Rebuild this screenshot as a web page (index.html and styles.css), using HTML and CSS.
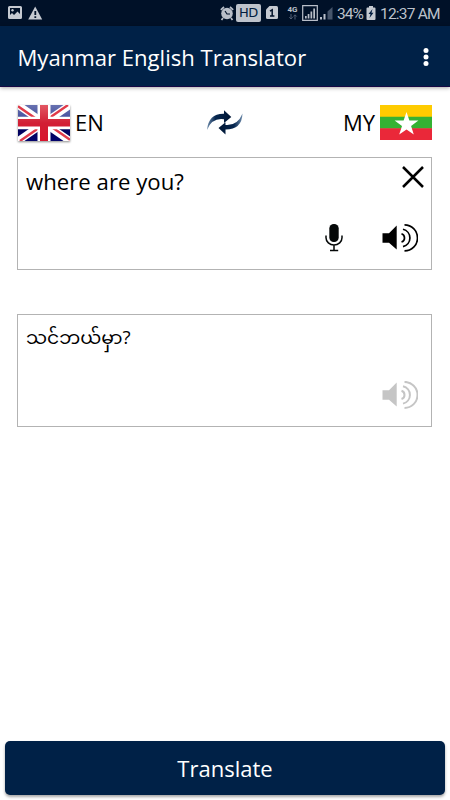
FILE: index.html
```html
<!DOCTYPE html>
<html lang="en">
<head>
<meta charset="utf-8">
<title>Myanmar English Translator</title>
<link rel="stylesheet" href="styles.css">
</head>
<body>
<div class="status">
  <div class="status-left">
    <svg width="14" height="14" viewBox="0 0 14 14"><path fill="#c5cad1" fill-rule="evenodd" d="M1.500 0h11Q14 0 14 1.500v10Q14 13 12.500 13h-11Q0 13 0 11.500v-10Q0 0 1.500 0zM2 2v7l2-2 2 2 3.500-3.500L12 8V2z"/><circle cx="4.500" cy="4.200" r="1.200" fill="#c5cad1"/></svg>
    <svg width="15" height="14" viewBox="0 0 15 14"><path fill="#c5cad1" d="M7.200 0.500 14.200 13.500H.2z"/><path fill="#001128" d="M6.400 5h1.800v4H6.400zM6.400 10.300h1.800V12H6.400z"/></svg>
  </div>
  <div class="status-right">
    <svg width="14" height="15" viewBox="0 0 14 15"><circle cx="7" cy="7.500" r="5.800" fill="#b9bfc9"/><path d="M.8 3.800 4 1M13.200 3.800 10 1M3 12l-1.500 2M11 12l1.500 2" stroke="#b9bfc9" stroke-width="1.700"/><path d="M5 5 7 8h3" fill="none" stroke="#001128" stroke-width="1.200"/></svg>
    <span class="hd">HD</span>
    <svg class="sim" width="12" height="14" viewBox="0 0 12 14"><path fill="#c5cad1" d="M3.500 0h7Q12 0 12 1.500v10Q12 13 10.500 13h-9Q0 13 0 11.500V3.500z"/><path d="M4 5.200 6.200 3.800V10M4 10h4.400" fill="none" stroke="#001128" stroke-width="1.500"/></svg>
    <span class="net"><span>4G</span><svg width="10" height="6" viewBox="0 0 10 6"><path d="M3 0v5M1.300 3.300 3 5l1.700-1.700M7 5.500V1M5.300 2.500 7 .8l1.700 1.700" fill="none" stroke="#526075"/></svg></span>
    <svg width="16" height="16" viewBox="0 0 16 16"><path d="M.7.7h14.600v14.600H.7z" fill="none" stroke="#b9bfc9" stroke-width="1.200"/><path d="M3 11h1.700v2.500H3zM5.700 9h1.700v4.500H5.700zM8.500 6.500h1.700v7H8.500zM11.300 3.500H13v10h-1.700z" fill="#b9bfc9"/></svg>
    <svg class="sig" width="13" height="13" viewBox="0 0 13 13"><path d="M0 10h2v2.500H0zM3.500 7h2v5.500h-2z" fill="#b9bfc9"/><path d="M7.500 4.500 12.500 0v12.500h-5z" fill="#46556b"/></svg>
    <span class="pct">34%</span>
    <svg class="bat" width="10" height="14" viewBox="0 0 10 14"><path fill="#c5cad1" d="M3 0h4v1.500h1.500Q9.500 1.500 9.500 2.500V13q0 1-1 1h-7q-1 0-1-1V2.500q0-1 1-1H3z"/><path d="M6.500 3 2.500 8h2L3.500 12l4-5.200h-2z" fill="#001c3f"/></svg>
    <span class="time">12:37 AM</span>
  </div>
</div>
<header class="bar">
  <h1>Myanmar English Translator</h1>
  <svg width="6" height="20" viewBox="0 0 6 20"><g fill="#fff"><circle cx="3" cy="3.500" r="2.500"/><circle cx="3" cy="10" r="2.500"/><circle cx="3" cy="16.500" r="2.500"/></g></svg>
</header>
<main>
  <div class="langs">
    <div class="lang">
      <svg class="flag uk" width="52" height="36" viewBox="0 0 52 37" preserveAspectRatio="none">
        <defs><linearGradient id="b" x2="0" y2="1"><stop offset="0" stop-color="#6871b0"/><stop offset=".49" stop-color="#3c4699"/><stop offset=".51" stop-color="#000052"/><stop offset="1" stop-color="#04046c"/></linearGradient><linearGradient id="r" x2="0" y2="1"><stop offset="0" stop-color="#e25763"/><stop offset=".5" stop-color="#d21f35"/><stop offset="1" stop-color="#d8142c"/></linearGradient></defs>
        <path fill="url(#b)" d="M0 0h52v37H0z"/>
        <path d="M0 0 52 37M52 0 0 37" stroke="#fff" stroke-width="7.500"/>
        <path d="M0 1.300 22 17M50 0 28 15.700M52 35.700 30 20M2 37 24 21.300" stroke="#e03a49" stroke-width="2.400"/>
        <path d="M19.500 0h13v37h-13zM0 12h52v13H0z" fill="#fff"/>
        <path d="M22 0h8v37h-8zM0 14.500h52v7.500H0z" fill="url(#r)"/>
      </svg>
      <span>EN</span>
    </div>
    <svg class="swap" width="38" height="28" viewBox="0 0 38 28">
      <defs><linearGradient id="s1"><stop offset="0" stop-color="#6f8dad"/><stop offset=".35" stop-color="#06264f"/><stop offset="1" stop-color="#001634"/></linearGradient><linearGradient id="s2"><stop offset="0" stop-color="#001634"/><stop offset=".65" stop-color="#06264f"/><stop offset="1" stop-color="#6f8dad"/></linearGradient></defs>
      <path fill="url(#s1)" d="M1 21Q2.500 4.500 18 4.800V1.200L25.300 8 18 14V10.300Q6 8.500 1 21z"/>
      <path fill="url(#s2)" d="M36.500 4.500Q36 20.500 19.500 20.500V25.500L12.500 19 19.500 13.300V16Q31.500 17 36.500 4.500z"/>
    </svg>
    <div class="lang">
      <span>MY</span>
      <svg class="flag" width="52" height="35" viewBox="0 0 52 35"><path fill="#fecb00" d="M0 0h52v12H0z"/><path fill="#34b233" d="M0 11.700h52v12H0z"/><path fill="#ea2839" d="M0 23.300h52V35H0z"/><path fill="#fff" d="M26.500 7l2.900 8.600h9l-7.300 5.400 2.700 8.600-7.300-5.200-7.300 5.200L22 21l-7.400-5.400h9z"/></svg>
    </div>
  </div>
  <section class="box source">
    <div class="line"><span>where are you?</span>
      <svg width="24" height="22" viewBox="0 0 24 22"><path d="M2 1 22 21M22 1 2 21" stroke="#000" stroke-width="2.500"/></svg></div>
    <div class="tools">
      <svg class="mic" width="18" height="28" viewBox="0 0 18 28"><rect x="4.300" y="0" width="9.400" height="18" rx="4.500" fill="#050808"/><path d="M1 11.500v2.200a8 7.300 0 0 0 16 0v-2.200M9 21v5.500M5 26.500h8.200" fill="none" stroke="#050808" stroke-width="1.500"/></svg>
      <svg class="sound" width="36" height="28" viewBox="0 0 36 28"><path d="M.5 9.300H7L14.700 1.500V25.500L7 18.700H.5z" fill="currentColor"/><path d="M19.500 9.800a4.300 4.300 0 0 1 0 8.200M21 5.200a9.300 9 0 0 1 0 17.400M22.500.9a13 13 0 0 1 0 26" fill="none" stroke="currentColor" stroke-width="1.700"/></svg>
    </div>
  </section>
  <section class="box target">
    <div class="line my"><span>သင်ဘယ်မှာ?</span></div>
    <div class="tools">
      <svg class="sound off" width="36" height="28" viewBox="0 0 36 28"><path d="M.5 9.300H7L14.700 1.500V25.500L7 18.700H.5z" fill="currentColor"/><path d="M19.500 9.800a4.300 4.300 0 0 1 0 8.200M21 5.200a9.300 9 0 0 1 0 17.400M22.500.9a13 13 0 0 1 0 26" fill="none" stroke="currentColor" stroke-width="2"/></svg>
    </div>
  </section>
</main>
<button class="go">Translate</button>
</body>
</html>
```
FILE: styles.css
```css
* { box-sizing: border-box; }
body {
  margin: 0;
  width: 450px;
  height: 800px;
  overflow: hidden;
  display: flex;
  flex-direction: column;
  background: #fff;
  color: #000;
  font-family: "Open Sans", "Noto Sans", "Noto Sans Myanmar", "Padauk", sans-serif;
}
svg { display: block; flex: none; }
.status {
  height: 26px;
  flex: none;
  background: #001128;
  display: flex;
  justify-content: space-between;
  padding: 0 10px 0 8px;
  color: #bcc2cb;
}
.status-left, .status-right { display: flex; align-items: center; }
.status-left { gap: 6px; }
.hd {
  width: 25px;
  height: 18px;
  margin: 0 5px 0 2px;
  border-radius: 2px;
  background: #bdc3cc;
  color: #001c3f;
  font: 13px/18px "DejaVu Sans", sans-serif;
  letter-spacing: -0.5px;
  text-align: center;
}
.net {
  width: 13px;
  margin: 0 3px 0 8px;
  display: flex;
  flex-direction: column;
  align-items: center;
  font: bold 8px/8px Roboto, sans-serif;
}
.sig { margin-left: 2px; }
.pct, .time { font: 15.500px/26px Roboto, sans-serif; white-space: nowrap; }
.pct { width: 26px; margin: 2px 3px 0 4px; letter-spacing: -1px; }
.time { width: 60px; margin: 2px 0 0 4px; letter-spacing: -0.8px; }
.bar {
  height: 61px;
  flex: none;
  background: #002147;
  border-bottom: 1px solid #160844;
  box-shadow: 0 1px 4px rgba(0, 0, 0, .35);
  display: flex;
  align-items: center;
  justify-content: space-between;
  padding: 0 21px 0 17.500px;
}
.bar svg { margin-top: 2px; }
h1 {
  margin: 2px 0 0;
  color: #fff;
  font-size: 22.100px;
  font-weight: 400;
  line-height: 32px;
  white-space: nowrap;
}
main { padding: 0 18px 0 17px; flex: 1; }
.langs {
  height: 70px;
  padding: 1px 0 0 1px;
  display: flex;
  justify-content: space-between;
  align-items: center;
}
.lang { width: 90px; display: flex; align-items: center; gap: 5px; font-size: 22px; }
.lang span { margin-top: -2px; }
.lang:last-child { justify-content: flex-end; }
.uk { filter: drop-shadow(0 1px 1px rgba(0, 0, 0, .45)); }
.box {
  height: 113px;
  border: 1px solid #b3b3b3;
  padding: 7px 6px 0 8px;
  display: flex;
  flex-direction: column;
}
.source { padding-top: 7px; }
.target { margin-top: 44px; }
.line {
  height: 34px;
  display: flex;
  justify-content: space-between;
  align-items: flex-start;
  font-size: 22.200px;
  line-height: 33px;
}
.my { font-size: 18.700px; line-height: 29px; }
.line svg { margin-top: 1px; }
.tools { display: flex; justify-content: flex-end; align-items: flex-start; padding: 25px 7px 0 0; gap: 39px; }
.off { color: #c5c5c5; }
.go {
  height: 54px;
  flex: none;
  margin: 0 5px 5px;
  border: 0;
  border-radius: 5px;
  background: #002147;
  box-shadow: 0 2px 3px rgba(0, 0, 0, .35);
  color: #fff;
  font: 22px/54px "Open Sans", sans-serif;
  padding: 0;
}
```
